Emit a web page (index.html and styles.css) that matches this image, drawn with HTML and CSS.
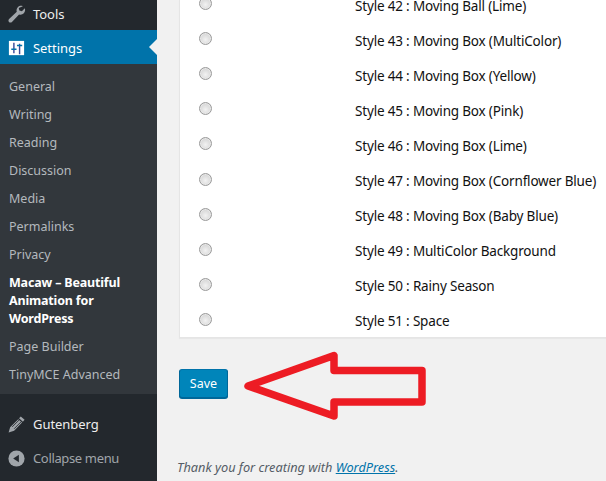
FILE: index.html
```html
<!DOCTYPE html>
<html lang="en">
<head>
<meta charset="utf-8">
<title>Settings</title>
<link rel="stylesheet" href="styles.css">
</head>
<body>
<div class="page">
  <nav class="sidebar">
    <div class="menu-item tools">
      <svg class="icon" viewBox="0 0 20 20"><path fill="#a0a5aa" d="M16.700 1.200c-1.800-.7-3.900-.3-5.300 1.100-1.300 1.300-1.700 3.200-1.100 4.900L2.200 14.800c-.9.900-.9 2.200-.1 3 .9.900 2.200.9 3.100 0l7.500-7.900c1.700.6 3.700.2 5-1.200 1.400-1.400 1.700-3.500 1-5.200l-3 3-2.700-.6-.6-2.700z"/></svg>
      <span>Tools</span>
    </div>
    <div class="menu-item current">
      <svg class="icon" viewBox="0 0 20 20"><path fill="#fff" d="M2 2h16v15H2z"/><path fill="#3a4a9a" d="M6.500 4H8v11H6.500zM12.500 5H14v11h-1.500z"/><path fill="#0073aa" d="M4.500 10h5.500v1.500H4.500zM10.500 6h5.500v1.500h-5.500z"/></svg>
      <span>Settings</span>
      <i class="pointer"></i>
    </div>
    <ul class="submenu">
      <li>General</li>
      <li>Writing</li>
      <li>Reading</li>
      <li>Discussion</li>
      <li>Media</li>
      <li>Permalinks</li>
      <li>Privacy</li>
      <li class="active">Macaw – Beautiful Animation for WordPress</li>
      <li>Page Builder</li>
      <li>TinyMCE Advanced</li>
    </ul>
    <div class="menu-item gutenberg">
      <svg class="icon" viewBox="0 0 20 20"><path fill="#a0a5aa" d="M14.500 1.500l4 3.500-1.800 2-4-3.500zM11.800 4.500l4 3.500-8.300 8.700-5.800 1.800 1.600-5.700z"/><path stroke="#23282d" stroke-width=".9" d="M5.500 12.500l7.200-7.200M7.500 14.500l7.200-7.200"/></svg>
      <span>Gutenberg</span>
    </div>
    <div class="menu-item collapse">
      <svg class="icon" viewBox="0 0 20 20"><circle cx="10" cy="10" r="8.500" fill="#a0a5aa"/><path fill="#23282d" d="M12.500 6v8L6.500 10z"/></svg>
      <span>Collapse menu</span>
    </div>
  </nav>
  <main class="content">
    <section class="card">
      <div class="row"><input type="radio" name="s"><span>Style 42 : Moving Ball (Lime)</span></div>
      <div class="row"><input type="radio" name="s"><span>Style 43 : Moving Box (MultiColor)</span></div>
      <div class="row"><input type="radio" name="s"><span>Style 44 : Moving Box (Yellow)</span></div>
      <div class="row"><input type="radio" name="s"><span>Style 45 : Moving Box (Pink)</span></div>
      <div class="row"><input type="radio" name="s"><span>Style 46 : Moving Box (Lime)</span></div>
      <div class="row"><input type="radio" name="s"><span>Style 47 : Moving Box (Cornflower Blue)</span></div>
      <div class="row"><input type="radio" name="s"><span>Style 48 : Moving Box (Baby Blue)</span></div>
      <div class="row"><input type="radio" name="s"><span>Style 49 : MultiColor Background</span></div>
      <div class="row"><input type="radio" name="s"><span>Style 50 : Rainy Season</span></div>
      <div class="row"><input type="radio" name="s"><span>Style 51 : Space</span></div>
    </section>
    <button class="save" type="button">Save</button>
    <p class="thanks">Thank you for creating with <a href="#">WordPress</a>.</p>
    <svg class="arrow" viewBox="0 0 190 74" aria-hidden="true"><path d="M4 37 90 6.500V21.500H178V53H90V67Z" fill="none" stroke="#ed1c24" stroke-width="7.500" stroke-linejoin="round"/></svg>
  </main>
</div>
</body>
</html>
```
FILE: styles.css
```css
* { box-sizing: border-box; }
html, body { margin: 0; height: 481px; overflow: hidden; }
body { background: #f1f1f1; font-family: "Noto Sans", "Open Sans", sans-serif; font-size: 13px; color: #000; }
.page { display: flex; height: 481px; overflow: hidden; }
.sidebar { width: 157px; flex: none; background: #23282d; display: flex; flex-direction: column; }
.menu-item { position: relative; display: flex; align-items: center; gap: 7px; padding-left: 7px; color: #eee; font-size: 13px; letter-spacing: -.05px; }
.icon { width: 19px; height: 19px; flex: none; }
.tools { height: 30px; padding-bottom: 2px; }
.current { height: 34px; background: #0073aa; color: #fff; padding-top: 2px; }
.pointer { position: absolute; right: 0; top: 9px; border: 8px solid transparent; border-right-color: #f1f1f1; border-left-width: 0; }
.submenu { list-style: none; margin: 0; padding: 14px 0 0; background: #32373c; height: 330px; color: #b4b9be; }
.submenu li { padding: 0 9px; line-height: 18px; margin-bottom: 10px; font-size: 12.500px; }
.submenu .active { color: #fff; font-weight: 700; letter-spacing: -.17px; }
.gutenberg { margin-top: 13px; height: 34px; }
.collapse { height: 34px; color: #a0a5aa; letter-spacing: -.35px; }
.content { position: relative; flex: 1; min-width: 0; padding-left: 22px; }
.card { width: 500px; height: 338px; overflow: hidden; background: #fff; border: 1px solid #e5e5e5; border-top: 0; box-shadow: 0 1px 1px rgba(0,0,0,.04); padding-left: 19px; display: flex; flex-direction: column; margin-bottom: 31px; }
.row { height: 35.100px; flex: none; display: flex; align-items: center; gap: 143px; font-size: 13.500px; letter-spacing: -.18px; color: #111; }
.row:first-child { margin-top: -12px; }
.row input { appearance: none; margin: 0; width: 13px; height: 13px; flex: none; position: relative; top: -2px; border: 1px solid #9a9a9a; border-radius: 50%; background: radial-gradient(circle at 50% 60%, #f2f2f2 0, #dcdcdc 55%, #c4c4c4 100%); box-shadow: inset 0 0 0 1px #e8e8e8; }
.save { display: block; width: 49px; height: 29px; background: #0085ba; border: 1px solid; border-color: #0073aa #006799 #006799; border-radius: 3px; box-shadow: 0 1px 0 #006799; color: #fff; font: 12.500px "Noto Sans", sans-serif; padding: 0; }
.thanks { margin: 60px 0 0 -2px; font-style: italic; font-size: 12.750px; color: #555d66; }
.thanks a { color: #0073aa; }
.arrow { position: absolute; left: 87px; top: 349px; width: 190px; height: 74px; }
```
